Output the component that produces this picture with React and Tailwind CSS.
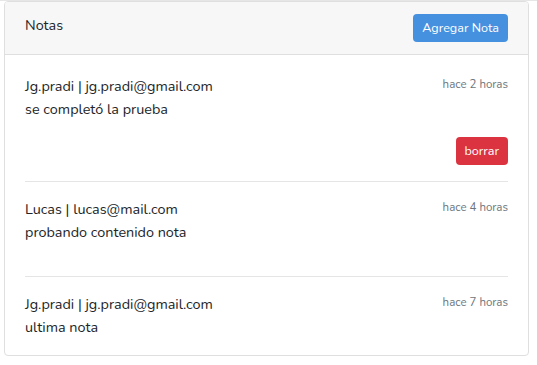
export default function App() {
  const notes = [
    { user: "Jg.pradi | jg.pradi@gmail.com", body: "se completó la prueba", time: "hace 2 horas", del: true },
    { user: "Lucas | lucas@mail.com", body: "probando contenido nota", time: "hace 4 horas" },
    { user: "Jg.pradi | jg.pradi@gmail.com", body: "ultima nota", time: "hace 7 horas", last: true },
  ];
  return (
    <div className="w-[537px] h-[365px] bg-white overflow-hidden text-[#212529]" style={{ fontFamily: "Nunito, Lato, 'Open Sans', sans-serif" }}>
      <div className="h-px bg-[#e6e6e6]" />
      <div className="ml-[4px] w-[525px] border border-[#dfdfdf] rounded-[4px] overflow-hidden">
        <div className="flex items-start justify-between px-5 py-3 bg-[#f7f7f7] border-b border-[#dfdfdf]">
          <span className="text-[14.4px] leading-[23px]">Notas</span>
          <button className="h-[28px] px-[9px] rounded-[4px] bg-[#4690e0] text-white text-[12.6px] leading-none">Agregar Nota</button>
        </div>
        <div className="px-5 pt-5">
          {notes.map((n, i) => (
            <div key={i}>
              <div className="flex justify-between items-start">
                <div className="text-[14.4px] leading-[23px]">
                  <div>{n.user}</div>
                  <div>{n.body}</div>
                </div>
                <span className="text-[11.5px] leading-[18px] text-[#6c757d]">{n.time}</span>
              </div>
              <div className="h-4" />
              {n.del && (
                <div className="flex justify-end">
                  <button className="h-[28px] px-[9px] rounded-[4px] bg-[#dc3340] text-white text-[12.6px] leading-none">borrar</button>
                </div>
              )}
              {!n.last && <div className="my-4 h-px bg-[#e5e5e5]" />}
            </div>
          ))}
        </div>
      </div>
    </div>
  );
}
